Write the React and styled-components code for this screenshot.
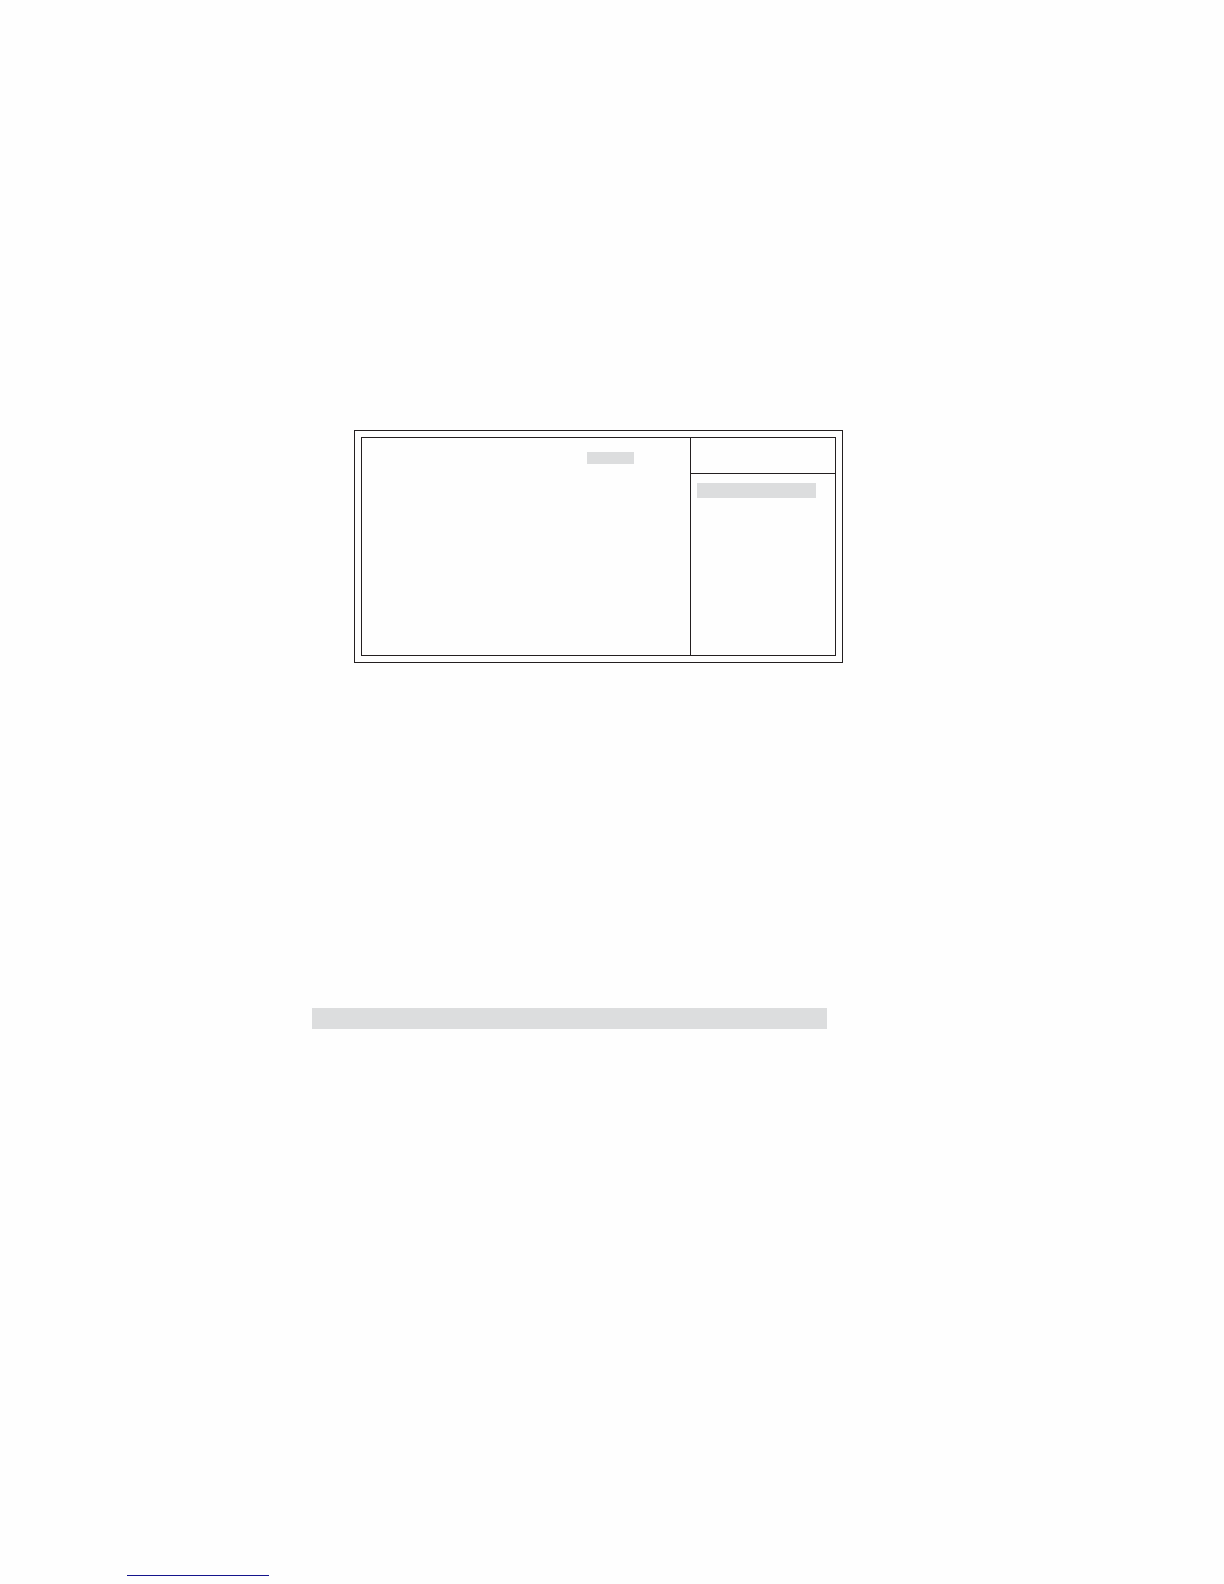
import React from 'react';
import styled, { createGlobalStyle } from 'styled-components';

const GlobalStyle = createGlobalStyle`
    body {
        margin: 0;
        background-color: #fefefe;
        font-family: "Liberation Sans", Arial, sans-serif;
    }
`;

const Page = styled.div`
    box-sizing: border-box;
    min-height: 100vh;
    display: flex;
    flex-direction: column;
    justify-content: space-between;
    padding-bottom: 8px;
`;

const Content = styled.main`
    padding: 430px 381px 0 312px;
`;

const Frame = styled.section`
    margin-left: 42px;
    padding: 6px;
    border: 1px solid #231f20;
`;

const Screen = styled.div`
    display: grid;
    grid-template-columns: 1fr 145px;
    min-height: 217px;
    border: 1px solid #231f20;
`;

const Settings = styled.div`
    display: flex;
    justify-content: flex-end;
    align-items: flex-start;
    padding: 14px 56px 0 0;
`;

const Help = styled.aside`
    border-left: 1px solid #231f20;
`;

const HelpHeader = styled.div`
    height: 35px;
    border-bottom: 1px solid #231f20;
`;

const HelpBody = styled.div`
    padding: 9px 19px 0 6px;
`;

const Highlight = styled.div`
    width: ${(props) => props.$width || 'auto'};
    height: ${(props) => props.$height};
    background-color: #dcddde;
`;

const TableHeading = styled.div`
    margin: 345px 16px 0 0;
`;

const Underline = styled.hr`
    width: 142px;
    height: 1px;
    margin: 0 0 0 127px;
    border: 0;
    background-color: #14148c;
`;

const App = () => {
    return (
        <>
            <GlobalStyle />
            <Page>
                <Content>
                    <Frame>
                        <Screen>
                            <Settings>
                                <Highlight $width="47px" $height="12px" />
                            </Settings>
                            <Help>
                                <HelpHeader />
                                <HelpBody>
                                    <Highlight $height="15px" />
                                </HelpBody>
                            </Help>
                        </Screen>
                    </Frame>
                    <TableHeading>
                        <Highlight $height="21px" />
                    </TableHeading>
                </Content>
                <Underline />
            </Page>
        </>
    );
}

export default App;
